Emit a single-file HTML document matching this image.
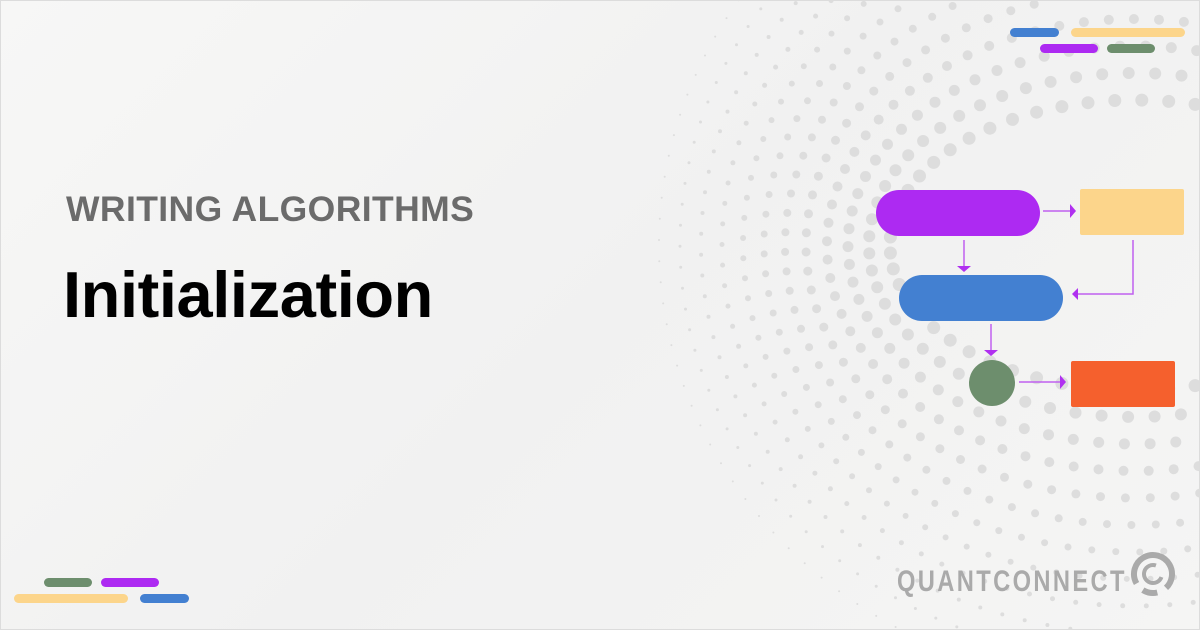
<!DOCTYPE html>
<html><head><style>
html,body{margin:0;padding:0}
body{width:1200px;height:630px;position:relative;overflow:hidden;background:linear-gradient(135deg,#f7f7f6 0%,#f1f1f1 50%,#f5f5f4 100%);font-family:"Liberation Sans",sans-serif}
.frame{position:absolute;inset:0;border:1px solid #dcdcdc;box-sizing:border-box}
.bar{position:absolute;height:9px;border-radius:5px}
h2{position:absolute;left:66px;top:189px;margin:0;font-size:35.5px;font-weight:700;color:#6b6b6b;letter-spacing:0.4px;white-space:nowrap}
h1{position:absolute;left:63px;top:257px;margin:0;font-size:65px;font-weight:700;color:#000;letter-spacing:-0.4px;white-space:nowrap}
.logo{position:absolute;left:897px;top:565px;font-size:30px;font-weight:700;color:#aaa;letter-spacing:3px;transform:scaleX(0.79);transform-origin:left;white-space:nowrap}
</style></head><body>
<svg id="dots" width="1200" height="630" style="position:absolute;left:0;top:0"></svg>
<div class="bar" style="left:1010px;top:28px;width:49px;background:#4380d1"></div>
<div class="bar" style="left:1071px;top:28px;width:114px;background:#fcd58b"></div>
<div class="bar" style="left:1040px;top:44px;width:58px;background:#ad2af2"></div>
<div class="bar" style="left:1107px;top:44px;width:48px;background:#6d8e6d"></div>
<div class="bar" style="left:44px;top:578px;width:48px;background:#6d8e6d"></div>
<div class="bar" style="left:101px;top:578px;width:58px;background:#ad2af2"></div>
<div class="bar" style="left:14px;top:594px;width:114px;background:#fcd58b"></div>
<div class="bar" style="left:140px;top:594px;width:49px;background:#4380d1"></div>
<h2>WRITING ALGORITHMS</h2>
<h1>Initialization</h1>
<svg width="1200" height="630" style="position:absolute;left:0;top:0">
<rect x="876" y="190" width="164" height="46" rx="23" fill="#ad2af2"/>
<rect x="1080" y="189" width="104" height="46" rx="2" fill="#fcd58b"/>
<rect x="899" y="275" width="164" height="46" rx="23" fill="#4380d1"/>
<circle cx="992" cy="383" r="23" fill="#6d8e6d"/>
<rect x="1071" y="361" width="104" height="46" rx="2" fill="#f5602d"/>
<g stroke="#c060f0" stroke-width="1.5" fill="none">
<line x1="1043" y1="211" x2="1072" y2="211"/>
<line x1="964" y1="240" x2="964" y2="267"/>
<polyline points="1133,240 1133,294 1078,294"/>
<line x1="991" y1="324" x2="991" y2="350"/>
<line x1="1019" y1="382" x2="1062" y2="382"/>
</g>
<g fill="#b030f0">
<polygon points="1070,204 1076,211 1070,218"/>
<polygon points="957,266 971,266 964,272"/>
<polygon points="1078,288 1072,294 1078,300"/>
<polygon points="984,350 998,350 991,356"/>
<polygon points="1060,375 1066,382 1060,389"/>
</g>
<g fill="none" stroke="#aaa">
<circle cx="1153" cy="574" r="19" stroke-width="6" stroke-dasharray="85 10 15 10" transform="rotate(150 1153 574)"/>
<circle cx="1153" cy="574" r="9" stroke-width="4" stroke-dasharray="42 15" transform="rotate(20 1153 574)"/>
</g>
</svg>
<div class="logo">QUANTCONNECT</div>
<div class="frame"></div>
<script>
var s=document.getElementById('dots'),cx=1135,cy=245,h='';
for(var j=0;j<12;j++){var rx=245+j*21,ry=145+j*27;var per=2*Math.PI*Math.sqrt((rx*rx+ry*ry)/2);var n=Math.floor(per/22);
for(var i=0;i<n;i++){var a=i*2*Math.PI/n+j*0.4,x=cx+rx*Math.cos(a),y=cy+ry*Math.sin(a);
if(x<0||x>1200||y<0||y>630)continue;
var rad=6.5-j*0.5;if(rad<0.7)continue;
h+='<circle cx="'+x.toFixed(1)+'" cy="'+y.toFixed(1)+'" r="'+rad.toFixed(1)+'" fill="#dddddd"/>';}}
s.innerHTML=h;
</script>
</body></html>
